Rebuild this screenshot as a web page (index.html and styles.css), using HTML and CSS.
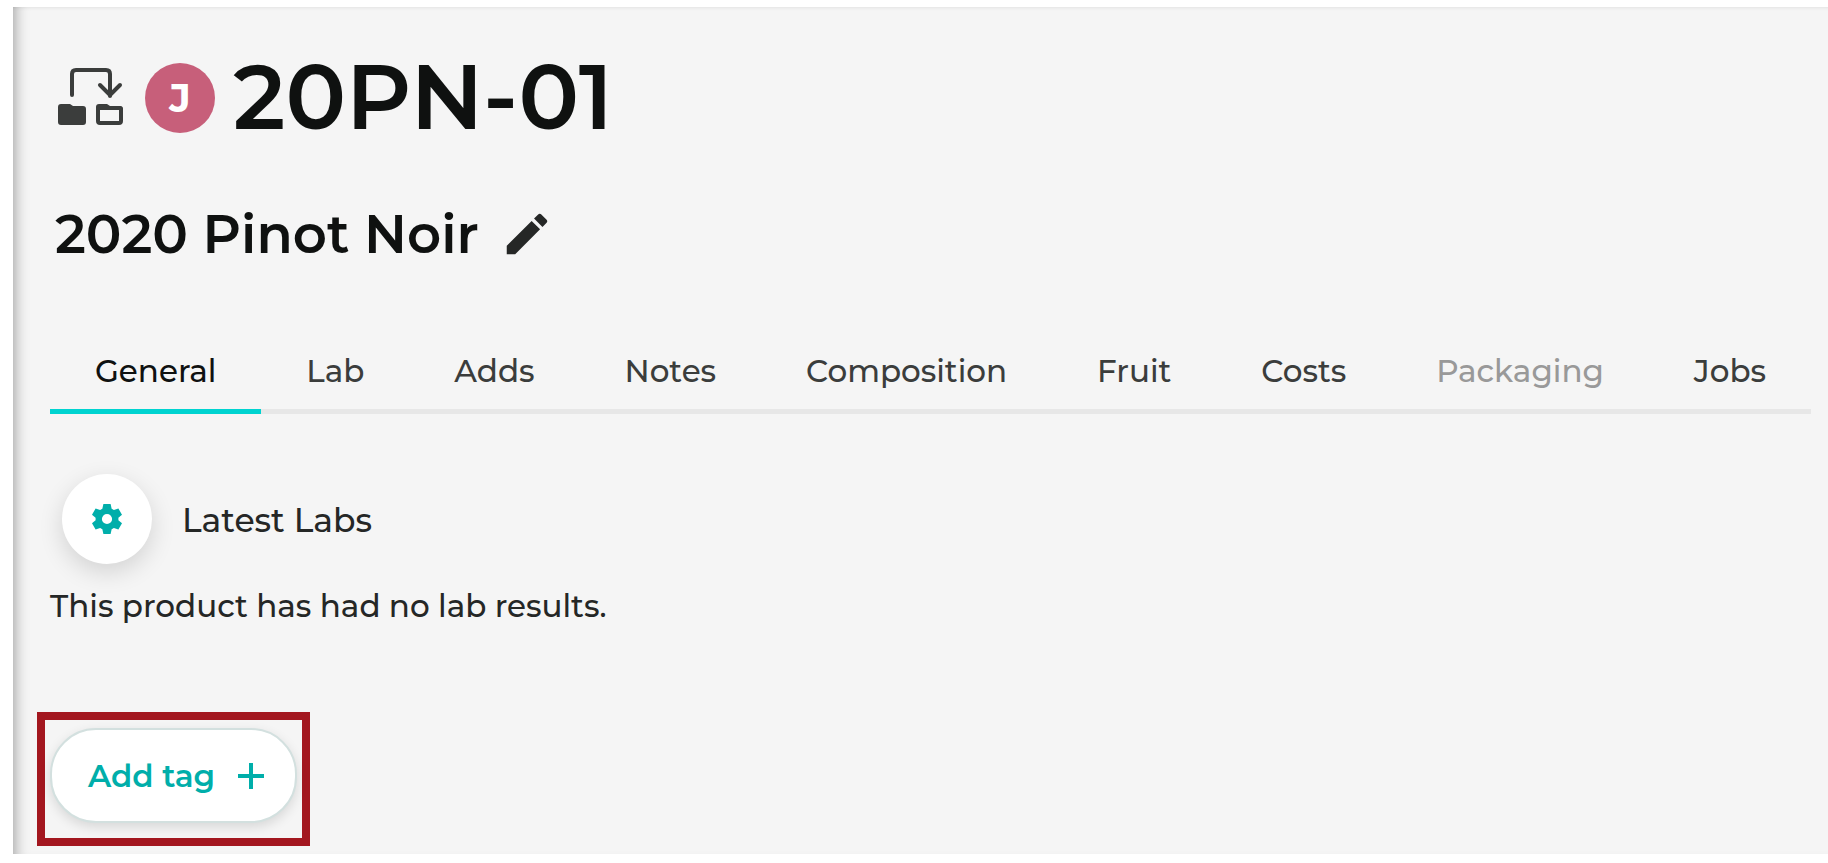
FILE: index.html
```html
<!DOCTYPE html>
<html lang="en">
<head>
    <meta charset="UTF-8">
    <meta name="viewport" content="width=device-width, initial-scale=1.0">
    <title>20PN-01 - 2020 Pinot Noir</title>
    <link rel="stylesheet" href="styles.css">
</head>
<body>
    <main class="panel">
        <header class="product-header">
            <svg class="transfer-icon" viewBox="0 0 66 58" aria-hidden="true">
                <g fill="none" stroke="#3b3d3c" stroke-width="4" stroke-linecap="round" stroke-linejoin="round">
                    <path d="M14 27V6q0-4 4-4h30q4 0 4 4v22"/>
                    <path d="M42 17l10 10 10-10"/>
                    <path d="M40 40h21q2 0 2 2v11q0 2-2 2H42q-2 0-2-2z"/>
                </g>
                <path fill="#3b3d3c" d="M3 36h9l3 2h10q3 0 3 3v13q0 3-3 3H3q-3 0-3-3V39q0-3 3-3z"/>
                <path fill="#3b3d3c" d="M41 36h8l3 2h10q3 0 3 3v1H38v-3q0-3 3-3z"/>
            </svg>
            <span class="avatar">J</span>
            <h1>20PN-01</h1>
        </header>

        <div class="product-name">
            <h2>2020 Pinot Noir</h2>
            <button class="edit-button" type="button" aria-label="Edit name">
                <svg viewBox="0 0 24 24" aria-hidden="true">
                    <path d="M3 17.250V21h3.750L17.810 9.940l-3.750-3.750L3 17.250zM20.710 7.040c.39-.39.39-1.020 0-1.410l-2.340-2.340c-.39-.39-1.020-.39-1.410 0l-1.830 1.830 3.750 3.750 1.830-1.830z"/>
                </svg>
            </button>
        </div>

        <nav class="tabs">
            <a class="tab active" href="#general">General</a>
            <a class="tab" href="#lab">Lab</a>
            <a class="tab" href="#adds">Adds</a>
            <a class="tab" href="#notes">Notes</a>
            <a class="tab" href="#composition">Composition</a>
            <a class="tab" href="#fruit">Fruit</a>
            <a class="tab" href="#costs">Costs</a>
            <a class="tab disabled" href="#packaging" aria-disabled="true">Packaging</a>
            <a class="tab" href="#jobs">Jobs</a>
        </nav>

        <section class="labs">
            <div class="labs-heading">
                <button class="settings-button" type="button" aria-label="Lab settings">
                    <svg viewBox="0 0 24 24" aria-hidden="true">
                        <path fill-rule="evenodd" d="M9.600 2h4.800l.7 3.100 1.500.9 3-1 2.400 4.100-2.400 2.100v1.600l2.400 2.100-2.400 4.100-3-1-1.500.9-.7 3.100H9.600l-.7-3.100-1.500-.9-3 1L2 14.900l2.400-2.100v-1.600L2 9.100 4.400 5l3 1 1.500-.9zM12 8.600a3.400 3.400 0 1 0 0 6.800 3.400 3.400 0 0 0 0-6.800z"/>
                    </svg>
                </button>
                <h3>Latest Labs</h3>
            </div>
            <p>This product has had no lab results.</p>
        </section>

        <div class="highlight">
            <button class="tag-button" type="button">
                Add tag
                <svg viewBox="0 0 26 26" aria-hidden="true">
                    <path d="M13 0v26M0 13h26"/>
                </svg>
            </button>
        </div>
    </main>
</body>
</html>
```
FILE: styles.css
```css
* {
    box-sizing: border-box;
}
body {
    margin: 0;
    padding: 7px 0 9px 13px;
    background-color: #fff;
    color: #252726;
    font-family: Montserrat, Inter, sans-serif;
    font-size: 31px;
    font-weight: 500;
    line-height: 40px;
}
h1, h2, h3, p {
    margin: 0;
}
button {
    border: none;
    padding: 0;
    font: inherit;
    cursor: pointer;
}
.panel {
    min-height: calc(100vh - 16px);
    padding: 36px 17px 8px 37px;
    background-color: #f5f5f5;
    box-shadow: inset 14px 0 14px -12px rgba(0,0,0,0.35), inset 0 4px 4px -4px rgba(0,0,0,0.1);
}
.product-header {
    display: flex;
    align-items: center;
    padding-left: 8px;
    height: 110px;
}
.transfer-icon {
    width: 66px;
    height: 58px;
    margin-right: 21px;
    margin-bottom: 2px;
}
.avatar {
    display: flex;
    align-items: center;
    justify-content: center;
    width: 70px;
    height: 70px;
    margin-right: 18px;
    border-radius: 50%;
    background-color: #c75f7a;
    color: #fff;
    font-size: 40px;
    font-weight: 700;
}
h1 {
    margin-bottom: 2px;
    color: #0f1110;
    font-size: 90px;
    font-weight: 600;
    line-height: 108px;
}
.product-name {
    display: flex;
    align-items: center;
    gap: 21px;
    margin-top: 48px;
    padding-left: 5px;
}
h2 {
    color: #0f1110;
    font-size: 53px;
    font-weight: 600;
    line-height: 66px;
}
.edit-button {
    background: none;
}
.edit-button svg {
    display: block;
    width: 54px;
    height: 54px;
    fill: #252726;
}
.tabs {
    display: flex;
    margin-top: 84px;
    border-bottom: 5px solid #e7e7e7;
}
.tab {
    flex: auto;
    margin-bottom: -5px;
    padding-bottom: 18px;
    border-bottom: 5px solid transparent;
    color: #3b3d3c;
    text-align: center;
    text-decoration: none;
}
.tab.active {
    border-color: #00d3d0;
    color: #0f1110;
}
.tab.disabled {
    color: #999;
    cursor: default;
}
.labs {
    margin-top: 60px;
}
.labs-heading {
    display: flex;
    align-items: center;
    gap: 30px;
    margin-bottom: 22px;
    padding-left: 12px;
}
.settings-button {
    display: flex;
    align-items: center;
    justify-content: center;
    width: 90px;
    height: 90px;
    border-radius: 50%;
    background-color: #fff;
    box-shadow: 0 8px 24px rgba(0,0,0,0.14);
}
.settings-button svg {
    width: 36px;
    height: 36px;
    fill: #00aeaa;
}
h3 {
    padding-top: 2px;
    font-size: 33px;
    font-weight: 500;
}
.highlight {
    width: fit-content;
    margin-top: 86px;
    margin-left: -13px;
    padding: 8px 5px 15px;
    border: 8px solid #a3171f;
}
.tag-button {
    display: flex;
    align-items: center;
    gap: 23px;
    height: 95px;
    padding: 0 31px 0 36px;
    border: 2px solid #d3e0df;
    border-radius: 46px;
    background-color: #fff;
    box-shadow: 0 4px 12px rgba(0,0,0,0.12);
    color: #00aeaa;
    font-weight: 600;
}
.tag-button svg {
    width: 26px;
    height: 26px;
    fill: none;
    stroke: currentColor;
    stroke-width: 4;
}
```
